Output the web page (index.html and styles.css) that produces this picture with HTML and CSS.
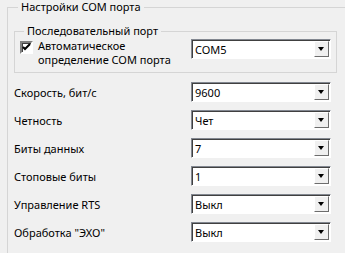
FILE: index.html
```
<!DOCTYPE html>
<html lang="ru">
<head>
  <meta charset="UTF-8">
  <title>Настройки COM порта</title>
  <link rel="stylesheet" href="styles.css">
</head>
<body>
  <fieldset class="group outer">
    <legend>Настройки COM порта</legend>

    <fieldset class="group inner">
      <legend>Последовательный порт</legend>
      <div class="port-row">
        <label class="check">
          <span class="box">
            <svg width="9" height="9" viewBox="0 0 9 9"><path d="M1 4 L3 6 L8 1" fill="none" stroke="#000" stroke-width="2"/></svg>
          </span>
          <span class="check-text">Автоматическое<br>определение COM порта</span>
        </label>
        <div class="combo"><span>COM5</span><i class="arrow"></i></div>
      </div>
    </fieldset>

    <div class="settings">
      <span class="lbl">Скорость, бит/с</span>
      <div class="combo"><span>9600</span><i class="arrow"></i></div>

      <span class="lbl">Четность</span>
      <div class="combo"><span>Чет</span><i class="arrow"></i></div>

      <span class="lbl">Биты данных</span>
      <div class="combo"><span>7</span><i class="arrow"></i></div>

      <span class="lbl">Стоповые биты</span>
      <div class="combo"><span>1</span><i class="arrow"></i></div>

      <span class="lbl">Управление RTS</span>
      <div class="combo"><span>Выкл</span><i class="arrow"></i></div>

      <span class="lbl">Обработка "ЭХО"</span>
      <div class="combo"><span>Выкл</span><i class="arrow"></i></div>
    </div>
  </fieldset>
</body>
</html>
```

FILE: styles.css
```
body {
  margin: 0;
  background: #f0f0f0;
  font-family: 'Noto Sans', Tahoma, sans-serif;
  font-size: 11px;
  color: #000;
  overflow: hidden;
}

.group {
  border: 1px solid #d5d5d5;
  margin: 0;
  padding: 0;
}

.group legend {
  padding: 0 3px;
  line-height: 14px;
}

.outer {
  box-sizing: border-box;
  margin-left: 7px;
  width: 338px;
  height: 253px;
  border-right: none;
  border-bottom: none;
  padding: 0 0 0 6px;
}

.outer > legend {
  margin-left: 4px;
}

.inner {
  margin-top: 10px;
  width: 311px;
  height: 47px;
  padding: 0 5px;
}

.inner > legend {
  margin-left: 4px;
}

.port-row {
  display: flex;
  justify-content: space-between;
  align-items: flex-start;
  margin-top: 1px;
}

.check {
  display: flex;
  align-items: flex-start;
  gap: 5px;
}

.box {
  width: 9px;
  height: 9px;
  margin-top: 2px;
  background: #fff;
  border: 2px solid;
  border-color: #808080 #fff #fff #808080;
  box-shadow: inset 1px 1px 0 #404040;
  display: flex;
  align-items: center;
  justify-content: center;
}

.check-text {
  line-height: 14px;
}

.settings {
  display: grid;
  grid-template-columns: 177px 140px;
  grid-auto-rows: 20px;
  row-gap: 8px;
  align-items: center;
  margin-top: 9px;
}

.combo {
  height: 20px;
  width: 140px;
  box-sizing: border-box;
  background: #fff;
  border: 1px solid;
  border-color: #828790 #fff #fff #828790;
  box-shadow: inset 1px 1px 0 #404040;
  display: flex;
  align-items: center;
  justify-content: space-between;
  padding: 1px 1px 1px 3px;
}

.arrow {
  width: 15px;
  height: 16px;
  box-sizing: border-box;
  background: #f0f0f0;
  border: 1px solid;
  border-color: #fff #6d6d6d #6d6d6d #fff;
  position: relative;
}

.arrow::after {
  content: "";
  position: absolute;
  left: 3px;
  top: 5px;
  border-left: 3.5px solid transparent;
  border-right: 3.5px solid transparent;
  border-top: 4px solid #000;
}
```
